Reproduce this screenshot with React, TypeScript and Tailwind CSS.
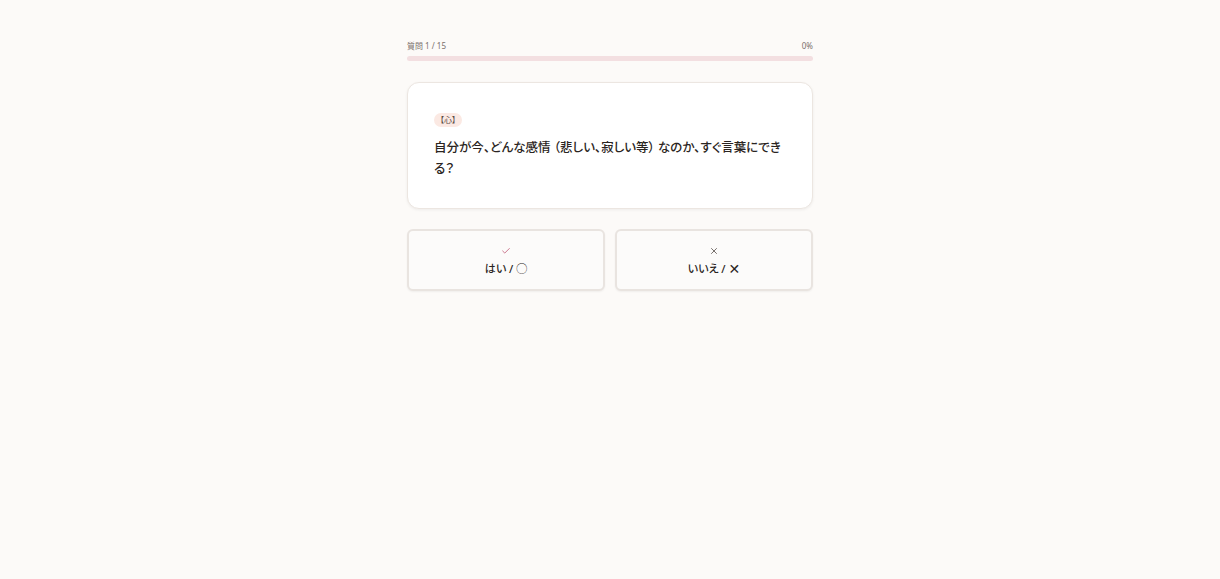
import { Check, X } from 'lucide-react';

export default function App() {
  const total = 15;
  const current = 1;
  const progress = 0;

  return (
    <div
      className="min-h-screen w-full bg-[#fcfaf8] text-[#2b2522]"
      style={{ fontFamily: '"Noto Sans", "Noto Sans CJK JP", sans-serif' }}
    >
      <div className="mx-auto w-[406px] pt-[40px]">
        {/* 進捗 */}
        <div className="flex items-center justify-between text-[8px] leading-[12px] text-[#7a706b]">
          <span>質問 {current} / {total}</span>
          <span>{progress}%</span>
        </div>
        <div className="mt-[4px] h-[5px] w-full rounded-full bg-[#f3dfe1]">
          <div className="h-full rounded-full bg-[#d9808f]" style={{ width: `${progress}%` }} />
        </div>

        {/* 質問カード */}
        <div className="mt-[21px] rounded-[12px] border border-[#ece6e1] bg-white px-[26px] pt-[30px] pb-[29px] shadow-[0_1px_3px_rgba(0,0,0,0.06)]">
          <div className="flex">
            <span className="rounded-full bg-[#fbe9e3] px-[6px] py-[2px] text-[8px] leading-[10px] text-[#5b4c46] [font-feature-settings:'palt']">
              【心】
            </span>
          </div>
          <p className="mt-[10px] text-[12.5px] font-medium leading-[21px] text-[#2a2421] [font-feature-settings:'palt']">
            自分が今、どんな感情 （悲しい、寂しい等） なのか、すぐ言葉にできる？
          </p>
        </div>

        {/* 回答 */}
        <div className="mt-[20px] grid grid-cols-2 gap-[10px]">
          <button className="flex h-[62px] flex-col items-center justify-center gap-[6px] rounded-[6px] border-2 border-[#e9e4e0] bg-[#fcfbfa] pt-[2px] shadow-[0_1px_2px_rgba(0,0,0,0.05)]">
            <Check className="h-[10px] w-[10px] text-[#c25d78]" strokeWidth={2} />
            <span className="text-[11px] font-medium leading-[14px] text-[#2a2421] [font-feature-settings:'palt']">はい / ◯</span>
          </button>
          <button className="flex h-[62px] flex-col items-center justify-center gap-[6px] rounded-[6px] border-2 border-[#e9e4e0] bg-[#fcfbfa] pt-[2px] shadow-[0_1px_2px_rgba(0,0,0,0.05)]">
            <X className="h-[10px] w-[10px] text-[#4a413d]" strokeWidth={1.8} />
            <span className="flex items-center text-[11px] font-medium leading-[14px] text-[#2a2421] [font-feature-settings:'palt']">
              いいえ /&nbsp;
              <span className="text-[14px] leading-[14px] font-normal" style={{ fontFamily: '"DejaVu Sans", sans-serif' }}>✕</span>
            </span>
          </button>
        </div>
      </div>
    </div>
  );
}
